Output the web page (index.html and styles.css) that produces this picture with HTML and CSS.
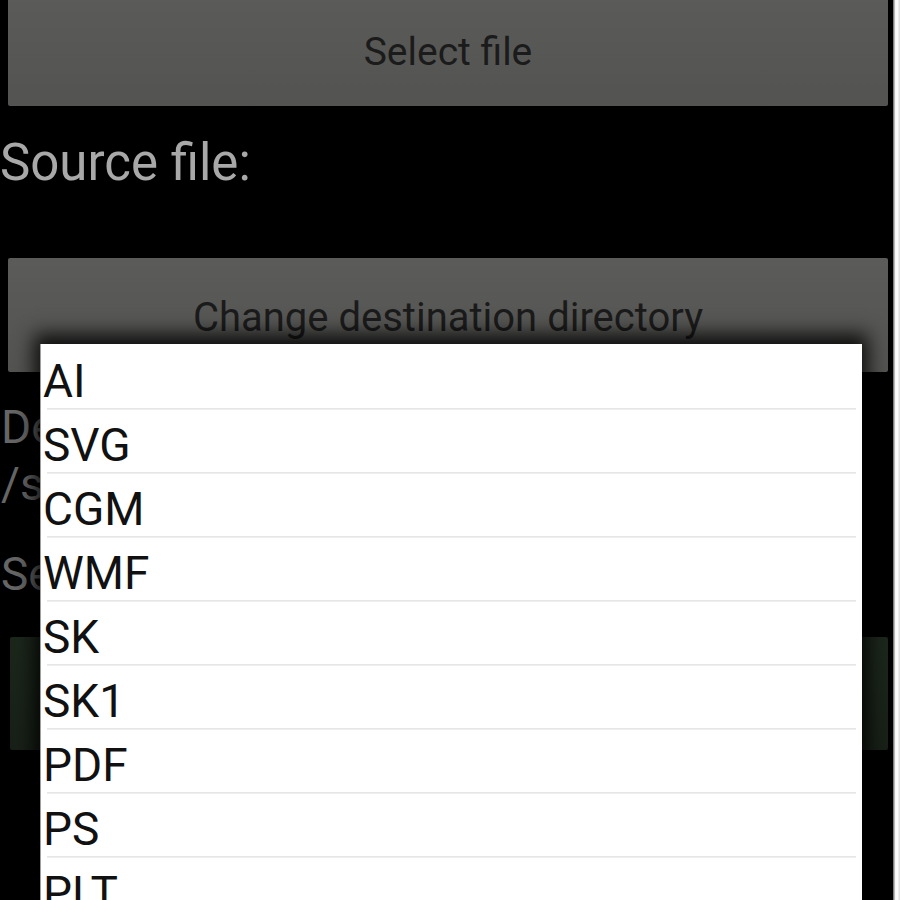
FILE: index.html
```html
<!DOCTYPE html>
<html lang="en">
<head>
<meta charset="utf-8">
<title>Converter</title>
<link rel="stylesheet" href="styles.css">
</head>
<body>
<div class="screen">
  <div class="btn btn-select">Select file</div>
  <div class="source">
    <div class="label-big">Source file:</div>
  </div>
  <div class="btn btn-dest">Change destination directory</div>
  <div class="dest">
    <div class="label-dim line1">Destination directory:</div>
    <div class="label-dim">/sdcard/Download</div>
    <div class="label-dim line3">Select output format:</div>
  </div>
  <div class="btn btn-format">PDF</div>

  <div class="popup">
    <ul class="list">
      <li>AI</li>
      <li>SVG</li>
      <li>CGM</li>
      <li>WMF</li>
      <li>SK</li>
      <li>SK1</li>
      <li>PDF</li>
      <li>PS</li>
      <li>PLT</li>
    </ul>
  </div>
</div>
<div class="edge"></div>
</body>
</html>
```
FILE: styles.css
```css
html, body {
  margin: 0;
  padding: 0;
}
body {
  background: #000;
  display: flex;
  width: 900px;
  height: 900px;
  overflow: hidden;
  font-family: Roboto, "Liberation Sans", sans-serif;
}
.screen {
  width: 893px;
  height: 900px;
  position: relative;
  flex: none;
}
.edge {
  width: 7px;
  height: 900px;
  flex: none;
  background: linear-gradient(to right, #5e5e5e, #f4f4f4 35%, #ffffff 60%, #d6d6d6);
}
.btn {
  margin: 0 5px 0 8px;
  height: 114px;
  box-sizing: border-box;
  padding-top: 5px;
  border-radius: 2px;
  background: linear-gradient(#5b5c59, #535451);
  display: flex;
  align-items: center;
  justify-content: center;
  font-size: 39px;
  color: #1b1b1b;
}
.btn-select {
  margin-top: -8px;
}
.btn-dest {
  font-size: 40px;
}
.btn-format {
  margin-top: 34px;
  height: 113px;
  margin-left: 10px;
  background: linear-gradient(#1c271c, #182017);
  color: #0c0f0c;
}
.source {
  height: 152px;
  box-sizing: border-box;
  padding-top: 27px;
}
.label-big {
  font-size: 51px;
  line-height: 60px;
  color: #a8a8a8;
  white-space: nowrap;
}
.dest {
  padding-top: 27px;
}
.label-dim {
  font-size: 46px;
  line-height: 57px;
  color: #666;
  white-space: nowrap;
  padding-left: 1px;
}
.label-dim.line3 {
  margin-top: 33px;
}
.popup {
  position: absolute;
  left: 40px;
  top: 344px;
  width: 822px;
  height: 620px;
  background: #fff;
  box-sizing: border-box;
  border-left: 1px solid #a0a0a0;
  padding-top: 2px;
  box-shadow: 0 -4px 18px 6px rgba(0, 0, 0, 0.85);
}
.list {
  list-style: none;
  margin: 0;
  padding: 0;
}
.list li {
  height: 64px;
  box-sizing: border-box;
  padding: 8px 0 0 2px;
  font-size: 46px;
  line-height: 55px;
  color: #111;
  background-image: linear-gradient(#e3e3e3, #f2f2f2);
  background-repeat: no-repeat;
  background-size: calc(100% - 12px) 2px;
  background-position: 6px 100%;
}
```
